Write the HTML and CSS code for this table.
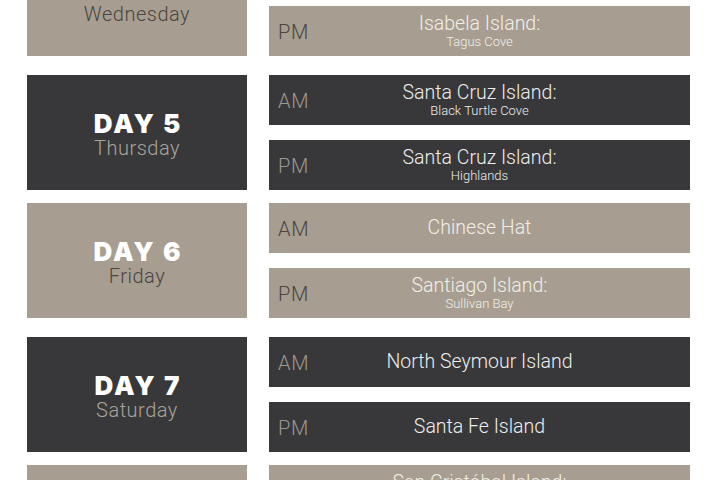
FILE: index.html
```html
<!DOCTYPE html>
<html lang="en">
<head>
<meta charset="utf-8">
<title>Itinerary</title>
<link rel="stylesheet" href="styles.css">
</head>
<body>
<main class="itinerary">
  <section class="day tan">
    <div class="day-box"><span class="day-num">DAY 4</span><span class="weekday">Wednesday</span></div>
    <div class="slots">
      <div class="slot"><span class="time">AM</span><div class="place"><span class="title">Isabela Island:</span><span class="sub">Urbina Bay</span></div></div>
      <div class="slot"><span class="time">PM</span><div class="place"><span class="title">Isabela Island:</span><span class="sub">Tagus Cove</span></div></div>
    </div>
  </section>
  <section class="day dark">
    <div class="day-box"><span class="day-num">DAY 5</span><span class="weekday">Thursday</span></div>
    <div class="slots">
      <div class="slot"><span class="time">AM</span><div class="place"><span class="title">Santa Cruz Island:</span><span class="sub">Black Turtle Cove</span></div></div>
      <div class="slot"><span class="time">PM</span><div class="place"><span class="title">Santa Cruz Island:</span><span class="sub">Highlands</span></div></div>
    </div>
  </section>
  <section class="day tan">
    <div class="day-box"><span class="day-num">DAY 6</span><span class="weekday">Friday</span></div>
    <div class="slots">
      <div class="slot"><span class="time">AM</span><div class="place"><span class="title">Chinese Hat</span></div></div>
      <div class="slot"><span class="time">PM</span><div class="place"><span class="title">Santiago Island:</span><span class="sub">Sullivan Bay</span></div></div>
    </div>
  </section>
  <section class="day dark">
    <div class="day-box"><span class="day-num">DAY 7</span><span class="weekday">Saturday</span></div>
    <div class="slots">
      <div class="slot"><span class="time">AM</span><div class="place"><span class="title">North Seymour Island</span></div></div>
      <div class="slot"><span class="time">PM</span><div class="place"><span class="title">Santa Fe Island</span></div></div>
    </div>
  </section>
  <section class="day tan">
    <div class="day-box"><span class="day-num">DAY 8</span><span class="weekday">Sunday</span></div>
    <div class="slots">
      <div class="slot"><span class="time">AM</span><div class="place"><span class="title">San Cristóbal Island:</span><span class="sub">Interpretation Center</span></div></div>
      <div class="slot"><span class="time">PM</span><div class="place"><span class="title">Departure</span></div></div>
    </div>
  </section>
</main>
</body>
</html>
```
FILE: styles.css
```css
html, body {
  margin: 0;
  padding: 0;
  background: #ffffff;
  overflow: hidden;
}

.itinerary {
  display: flex;
  flex-direction: column;
  padding-left: 27px;
  margin-top: -59px;
  font-family: Roboto, "Liberation Sans", sans-serif;
}

.day {
  display: grid;
  grid-template-columns: 220px 421px;
  column-gap: 22px;
  height: 115px;
}

.day.tan { margin-bottom: 19px; }
.day.dark { margin-bottom: 13px; }

.day-box {
  display: flex;
  flex-direction: column;
  align-items: center;
  justify-content: center;
  padding-top: 4px;
  box-sizing: border-box;
}

.day-num {
  font-family: Inter, "Open Sans", sans-serif;
  font-weight: 900;
  font-size: 26px;
  line-height: 27px;
  color: #ffffff;
  letter-spacing: 2px;
  margin-right: -2px;
}

.weekday {
  font-weight: 300;
  font-size: 20px;
  line-height: 22px;
  letter-spacing: 0.5px;
}

.slots {
  display: flex;
  flex-direction: column;
  gap: 15px;
}

.slot {
  position: relative;
  height: 50px;
  display: flex;
  align-items: center;
  justify-content: center;
}

.time {
  position: absolute;
  left: 9px;
  top: 50%;
  transform: translateY(-50%);
  font-weight: 300;
  font-size: 20px;
  line-height: 20px;
  letter-spacing: 0.8px;
  margin-top: 1px;
}

.place {
  display: flex;
  flex-direction: column;
  align-items: center;
}

.title {
  font-weight: 300;
  font-size: 19.5px;
  line-height: 20px;
}

.sub {
  font-weight: 300;
  font-size: 13px;
  line-height: 15px;
}

/* colour themes */
.tan .day-box, .tan .slot { background: #a79e91; }
.dark .day-box, .dark .slot { background: #38383a; }

.tan .weekday, .tan .time { color: #4a4540; }
.dark .weekday { color: #a9a49c; }
.dark .time { color: #9c978f; }

.tan .title, .tan .sub { color: #f2eee7; }
.dark .title, .dark .sub { color: #ededed; }
```
